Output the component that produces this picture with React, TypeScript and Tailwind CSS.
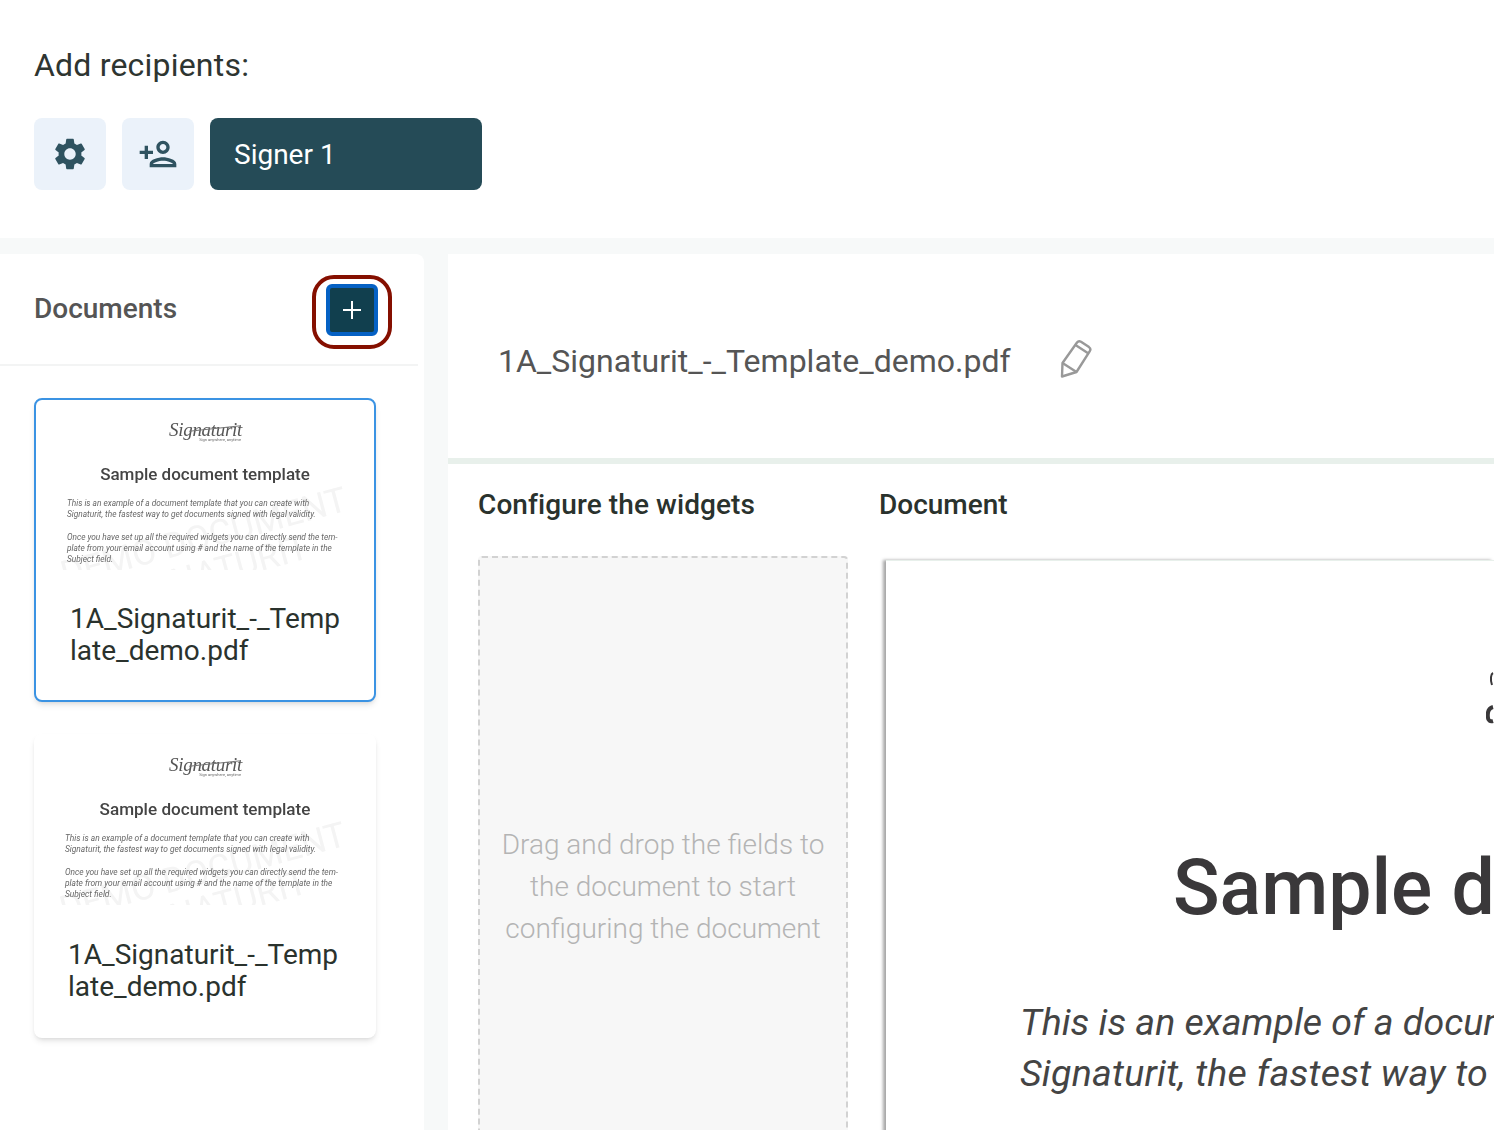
import { MdSettings, MdOutlinePersonAdd } from "react-icons/md";

function Thumb({ offset, bodySize, titleSize }: { offset: string; bodySize: string; titleSize: string }) {
  return (
    <div className="relative h-[170px] overflow-hidden blur-[0.35px]">
      <div className="absolute left-[25px] top-[117px] w-[310px] -rotate-[15deg] text-[35px] leading-[36px] text-[#f4f4f4] whitespace-nowrap">
        DEMO DOCUMENT
        <div className="pl-[50px]">SIGNATURIT</div>
      </div>
      <div className="relative flex flex-col items-center">
        <div className="relative mt-[19px] h-[30px] w-[72px]">
          <div className="font-['Liberation_Serif',serif] text-[19px] italic leading-[22px] tracking-[-0.3px] text-[#555]">Signaturit</div>
          <div className="absolute left-[20px] top-[9px] h-px w-[52px] -rotate-[6deg] bg-[#777]" />
          <div className="absolute right-0 top-[18px] text-[4px] leading-[6px] text-[#666] whitespace-nowrap">Sign anywhere, anytime</div>
        </div>
        <div className={`mt-[14px] font-medium leading-[22px] text-[#444] ${titleSize}`}>Sample document template</div>
      </div>
      <div className={`relative mt-[13px] italic leading-[11px] text-[#666] whitespace-nowrap ${offset} ${bodySize}`}>
        <div>This is an example of a document template that you can create with</div>
        <div>Signaturit, the fastest way to get documents signed with legal validity.</div>
        <div className="mt-[12px]">Once you have set up all the required widgets you can directly send the tem-</div>
        <div>plate from your email account using # and the name of the template in the</div>
        <div>Subject field.</div>
      </div>
    </div>
  );
}

export default function App() {
  return (
    <div className="h-[1130px] overflow-hidden bg-[#f7f9f9] font-['Roboto',sans-serif]">
      <div className="h-[238px] bg-white pl-[34px]">
        <h1 className="pt-[45px] text-[32px] leading-[40px] tracking-[0.2px] text-[#2e3531]">Add recipients:</h1>
        <div className="mt-[33px] flex gap-[16px]">
          <button className="flex h-[72px] w-[72px] items-center justify-center rounded-lg bg-[#ebf2fa] text-[#2f5360]">
            <MdSettings size={38} />
          </button>
          <button className="flex h-[72px] w-[72px] items-center justify-center rounded-lg bg-[#ebf2fa] text-[#2f5360]">
            <MdOutlinePersonAdd size={40} />
          </button>
          <div className="flex h-[72px] w-[272px] items-center rounded-lg bg-[#254b57] pl-[24px] pt-[2px] text-[28px] text-white">Signer 1</div>
        </div>
      </div>

      <div className="mt-[16px] flex">
        <aside className="h-[876px] w-[424px] shrink-0 rounded-tr-lg bg-white">
          <div className="mr-[6px] flex h-[112px] items-center justify-between border-b-2 border-[#f3f4f4] pl-[34px] pr-[26px]">
            <h2 className="text-[28px] font-medium text-[#555]">Documents</h2>
            <div className="mt-[6px] flex h-[74px] w-[80px] items-center justify-center rounded-[22px] border-4 border-[#850f00]">
              <button className="-mt-[4px] flex h-[52px] w-[52px] items-center justify-center rounded-md border-4 border-[#0561c4] bg-[#113f4e]">
                <svg width="20" height="20" viewBox="0 0 20 20" className="text-white">
                  <path d="M10 1v18M1 10h18" stroke="currentColor" strokeWidth="2" />
                </svg>
              </button>
            </div>
          </div>
          <div className="flex flex-col gap-[32px] pl-[34px] pt-[32px]">
            <div className="h-[304px] w-[342px] rounded-lg border-2 border-[#3b93e3] bg-white shadow-md">
              <Thumb offset="pl-[31px]" bodySize="text-[8.3px]" titleSize="text-[17px]" />
              <div className="mt-[33px] pl-[34px] pr-[31px] text-[28px] leading-[32px] break-all text-[#2a322d]">1A_Signaturit_-_Template_demo.pdf</div>
            </div>
            <div className="h-[304px] w-[342px] rounded-lg bg-white p-px shadow-md">
              <Thumb offset="pl-[30px]" bodySize="text-[8.4px]" titleSize="text-[17.1px]" />
              <div className="mt-[34px] pl-[33px] pr-[36px] text-[28px] leading-[32px] break-all text-[#2a322d]">1A_Signaturit_-_Template_demo.pdf</div>
            </div>
          </div>
        </aside>

        <main className="ml-[24px] h-[876px] min-w-0 flex-1 overflow-hidden bg-white">
          <div className="flex h-[210px] items-center gap-[48px] border-b-[6px] border-[#e8f0eb] pl-[50px] pt-[10px]">
            <span className="text-[32px] text-[#555]">1A_Signaturit_-_Template_demo.pdf</span>
            <svg width="34" height="40" viewBox="0 0 34 40" fill="none" stroke="#999" strokeWidth="2.4" strokeLinejoin="round" className="-mt-[4px]">
              <path d="M3 37.5 3.5 24 18 3.5a3 3 0 0 1 4-.8l8 5.4a3 3 0 0 1 .8 4L17.500 33Z" />
              <path d="M3.500 24 17.500 33M16.500 6l13 8.500" />
            </svg>
          </div>
          <div className="flex gap-[31px] pl-[30px]">
            <div className="w-[370px] shrink-0">
              <h3 className="pt-[21px] text-[28px] font-medium leading-[40px] tracking-[0.1px] text-[#2a322d]">Configure the widgets</h3>
              <div className="mt-[31px] flex h-[620px] items-center justify-center rounded-sm border-2 border-dashed border-[#d2d2d2] bg-[#f7f7f7] px-[20px] text-center text-[28px] font-light leading-[42px] text-[#b4b4b4]">
                <p className="mt-[41px]">Drag and drop the fields to the document to start configuring the document</p>
              </div>
            </div>
            <div className="min-w-0 flex-1">
              <h3 className="pt-[21px] text-[28px] font-medium leading-[40px] text-[#2a322d]">Document</h3>
              <div className="relative ml-[7px] mt-[35px] h-[620px] overflow-hidden whitespace-nowrap border-t border-[#e8f0eb] bg-white shadow-[-3px_0_3px_rgba(0,0,0,0.35)]">
                <svg width="8" height="60" viewBox="0 0 8 60" fill="none" stroke="#3a383a" className="absolute left-[600px] top-[110px]">
                  <path d="M7 2c-2 1-3 6-1 12" strokeWidth="2" />
                  <path d="M7 36c-4 1-6 4-5 11 0 2 2 4 5 3" strokeWidth="4" />
                </svg>
                <div className="pl-[287px] pt-[282px] text-[77px] font-medium leading-[90px] text-[#3a383a]">Sample document template</div>
                <div className="mt-[64px] pl-[134px] text-[37.5px] italic leading-[51px] text-[#444]">
                  <div>This is an example of a document template</div>
                  <div className="tracking-[0.25px]">Signaturit, the fastest way to get documents</div>
                </div>
              </div>
            </div>
          </div>
        </main>
      </div>
    </div>
  );
}
